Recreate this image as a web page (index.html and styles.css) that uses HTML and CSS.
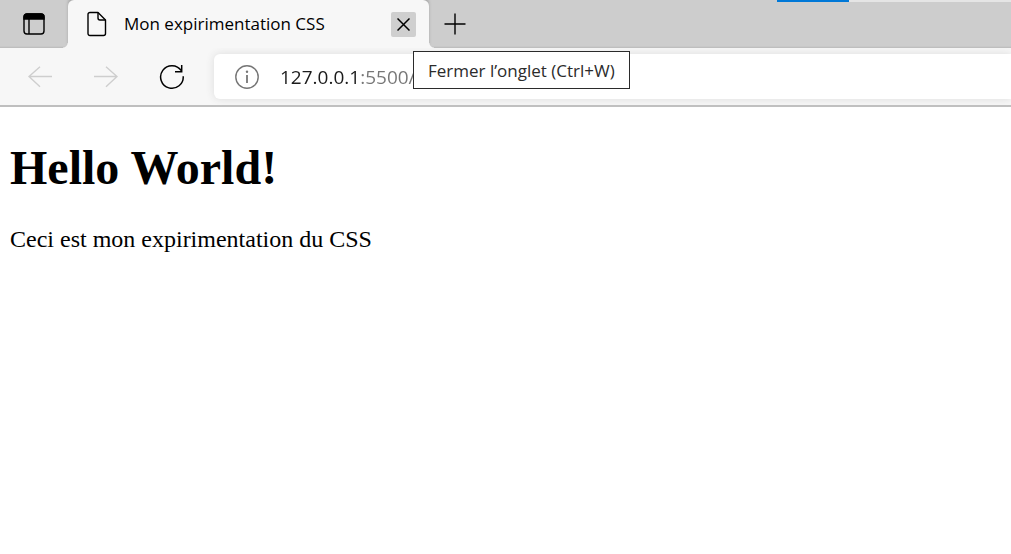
FILE: index.html
```html
<!DOCTYPE html>
<html lang="fr">
<head>
<meta charset="utf-8">
<meta name="viewport" content="width=device-width, initial-scale=1">
<title>Mon expirimentation CSS</title>
<link rel="stylesheet" href="styles.css">
</head>
<body>
<header class="browser">
  <div class="tab-strip">
    <button class="tab-actions" type="button" aria-label="Menu Actions des onglets">
      <svg width="22" height="22" viewBox="0 0 22 22" fill="none" stroke="#000" stroke-width="1.4"><rect x="1" y="1" width="20" height="20" rx="3"/><path d="M1 6V4a3 3 0 0 1 3-3h14a3 3 0 0 1 3 3v2z" fill="#000"/><path d="M6 6v15"/></svg>
    </button>
    <div class="tab">
      <svg class="tab-icon" width="20" height="26" viewBox="0 0 20 26" fill="none" stroke="#000" stroke-width="1.4" stroke-linejoin="round"><path d="M3 1.5h8L18.500 9v13.500a2 2 0 0 1-2 2H3a2 2 0 0 1-2-2v-19a2 2 0 0 1 2-2z"/><path d="M11 1.500V7a2 2 0 0 0 2 2h5.500"/></svg>
      <span class="tab-title">Mon expirimentation CSS</span>
      <div class="tab-close">
        <button class="close" type="button" aria-label="Fermer l’onglet" aria-describedby="close-tip">
          <svg width="13" height="13" viewBox="0 0 13 13" fill="none" stroke="#000" stroke-width="1.5"><path d="M.5.5l12 12M12.500.5l-12 12"/></svg>
        </button>
        <div class="tooltip" id="close-tip" role="tooltip">Fermer l’onglet (Ctrl+W)</div>
      </div>
    </div>
    <button class="new-tab" type="button" aria-label="Nouvel onglet">
      <svg width="22" height="22" viewBox="0 0 22 22" stroke="#000" stroke-width="1.4"><path d="M11 .5v21M.5 11h21"/></svg>
    </button>
    <div class="share-bar"></div>
  </div>
  <div class="toolbar">
    <nav class="nav" aria-label="Navigation">
      <button class="nav-button" type="button" aria-label="Précédent" disabled>
        <svg width="24" height="22" viewBox="0 0 24 22" fill="none" stroke="#cecece" stroke-width="1.4"><path d="M12 .8L1 10.500l11 10.200M1 10.500h23"/></svg>
      </button>
      <button class="nav-button" type="button" aria-label="Suivant" disabled>
        <svg width="24" height="22" viewBox="0 0 24 22" fill="none" stroke="#cecece" stroke-width="1.4"><path d="M12 .8L23 10.500 12 20.700M23 10.500H0"/></svg>
      </button>
      <button class="nav-button" type="button" aria-label="Actualiser">
        <svg width="26" height="26" viewBox="0 0 26 26" fill="none" stroke="#000" stroke-width="1.5"><path d="M24.200 12.200A11.300 11.300 0 1 1 22.300 6.700M22.700 1v6.700H16"/></svg>
      </button>
    </nav>
    <div class="address">
      <button class="site-info" type="button" aria-label="Informations sur le site">
        <svg width="24" height="24" viewBox="0 0 24 24" fill="none" stroke="#767676" stroke-width="1.4"><circle cx="12" cy="12" r="11.200"/><path d="M12 10v8" stroke-width="1.8"/><circle cx="12" cy="6.800" r="1.200" fill="#767676" stroke="none"/></svg>
      </button>
      <input class="url" type="text" aria-label="Barre d’adresse" value="127.0.0.1:5500/" spellcheck="false">
    </div>
  </div>
</header>
<main class="page">
  <h1 class="page-title">Hello World!</h1>
  <p class="page-text">Ceci est mon expirimentation du CSS</p>
</main>
</body>
</html>
```
FILE: styles.css
```css
* {
  box-sizing: border-box;
}

body {
  margin: 0;
  background: #fff;
  color: #000;
}

button {
  display: flex;
  align-items: center;
  justify-content: center;
  margin: 0;
  padding: 0;
  border: 0;
  background: none;
}

svg {
  flex: none;
}

.browser {
  font-family: "Open Sans", "Noto Sans", sans-serif;
  border-bottom: 2px solid #bfbfbf;
}

.tab-strip {
  position: relative;
  display: flex;
  height: 48px;
  background: linear-gradient(#cdcdcd 46px, #b9b9b9);
}

.tab-actions {
  width: 68px;
}

.tab {
  position: relative;
  display: flex;
  align-items: center;
  width: 361px;
  padding: 0 13px 0 19px;
  border-radius: 6px 6px 0 0;
  background: #f7f7f7;
  box-shadow: 0 -3px 3px #a8a8a8;
}

/* Rounded feet where the tab meets the toolbar */
.tab::before,
.tab::after {
  content: "";
  position: absolute;
  bottom: 0;
  width: 5px;
  height: 5px;
}

.tab::before {
  right: 100%;
  background: radial-gradient(circle at top left, transparent 4px, #f7f7f7 5px);
}

.tab::after {
  left: 100%;
  background: radial-gradient(circle at top right, transparent 4px, #f7f7f7 5px);
}

.tab-title {
  flex: 1;
  margin-left: 17px;
  font-size: 17px;
  line-height: 24px;
  white-space: nowrap;
}

.tab-close {
  position: relative;
  z-index: 2;
}

.close {
  width: 25px;
  height: 25px;
  border-radius: 2px;
  background: #cfcfcf;
}

.tooltip {
  position: absolute;
  top: 39px;
  left: 22px;
  padding: 7px 14px 5px;
  border: 1px solid #2b2b2b;
  background: #fff;
  color: #2b2b2b;
  font-size: 17px;
  line-height: 24px;
  white-space: nowrap;
}

.new-tab {
  width: 52px;
}

.share-bar {
  position: absolute;
  top: 0;
  right: 0;
  width: 234px;
  height: 2px;
  background: linear-gradient(to right, #0078d7 72px, #e5e5e5 72px);
}

.toolbar {
  display: flex;
  gap: 9px;
  padding: 6px 0;
  background: #f7f7f7;
}

.nav {
  display: flex;
  padding-left: 7px;
}

.nav-button {
  width: 66px;
}

.address {
  display: flex;
  flex: 1;
  height: 45px;
  border-radius: 6px 0 0 6px;
  background: #fff;
  box-shadow: 0 0 9px #dcdcdc;
}

.site-info {
  width: 66px;
}

.url {
  flex: 1;
  min-width: 0;
  padding: 0;
  border: 0;
  outline: 0;
  background: linear-gradient(to right, #1b1b1b 80px, #767676 80px);
  background-clip: text;
  -webkit-background-clip: text;
  color: transparent;
  font: 19px "Open Sans", "Noto Sans", sans-serif;
}

.page {
  padding: 1px 10px;
  font-family: "Liberation Serif", "Times New Roman", serif;
}

.page-title {
  margin: 32px 0 31px;
  font-size: 48px;
  line-height: 55px;
}

.page-text {
  margin: 0;
  font-size: 24px;
  line-height: 27px;
}
```
